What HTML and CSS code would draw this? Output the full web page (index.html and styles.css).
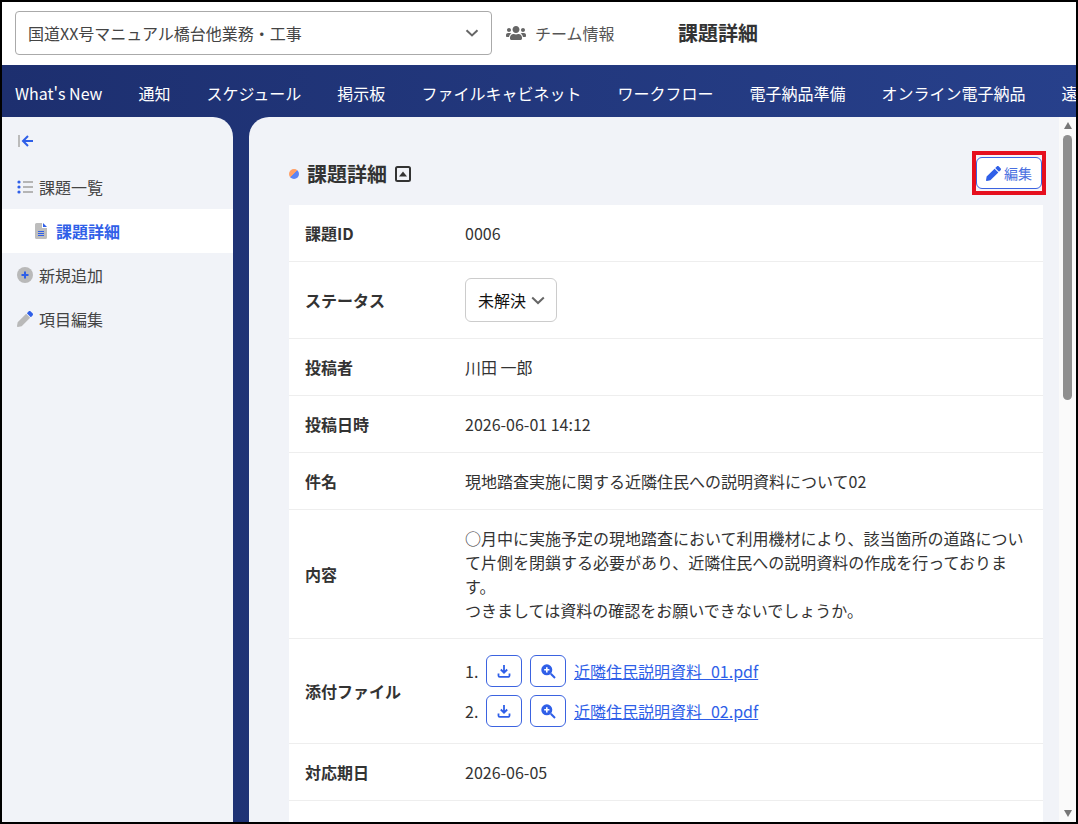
FILE: index.html
```html
<!DOCTYPE html>
<html lang="ja">
<head>
<meta charset="utf-8">
<title>課題詳細</title>
<link rel="stylesheet" href="styles.css">
</head>
<body>
<div class="frame">
  <header class="topbar">
    <div class="project-select">
      <span>国道XX号マニュアル橋台他業務・工事</span>
      <svg class="chev" viewBox="0 0 14 8" width="14" height="8"><path d="M1.5 1.2 7 6.4l5.5-5.2" fill="none" stroke="#666" stroke-width="2"/></svg>
    </div>
    <div class="team">
      <svg viewBox="0 0 640 512" width="20" height="16"><path fill="#666" d="M96 224c35.3 0 64-28.7 64-64s-28.7-64-64-64-64 28.7-64 64 28.7 64 64 64zm448 0c35.3 0 64-28.7 64-64s-28.7-64-64-64-64 28.7-64 64 28.7 64 64 64zm32 32h-64c-17.6 0-33.5 7.1-45.1 18.6 40.3 22.1 68.9 62 75.1 109.4h66c17.7 0 32-14.3 32-32v-32c0-35.3-28.7-64-64-64zm-256 0c61.9 0 112-50.1 112-112S381.9 32 320 32 208 82.1 208 144s50.1 112 112 112zm76.8 32h-8.3c-20.8 10-43.9 16-68.5 16s-47.6-6-68.5-16h-8.3C179.6 288 128 339.6 128 403.2V432c0 26.5 21.5 48 48 48h288c26.5 0 48-21.5 48-48v-28.8c0-63.6-51.6-115.2-115.2-115.2zm-223.7-13.4C161.5 263.1 145.6 256 128 256H64c-35.3 0-64 28.7-64 64v32c0 17.7 14.3 32 32 32h65.9c6.3-47.4 34.9-87.3 75.2-109.4z"/></svg>
      <span>チーム情報</span>
    </div>
    <div class="page-title">課題詳細</div>
  </header>
  <nav class="mainnav">
    <a>What's New</a><a>通知</a><a>スケジュール</a><a>掲示板</a><a>ファイルキャビネット</a><a>ワークフロー</a><a>電子納品準備</a><a>オンライン電子納品</a><a>遠隔臨場</a>
  </nav>
  <div class="workspace">
    <aside class="sidebar">
      <div class="collapse">
        <svg viewBox="0 0 16 14" width="16" height="14"><rect x="0" y="1" width="2" height="12" fill="#bbb"/><path d="M10 2 5 7l5 5M5 7h10" fill="none" stroke="#2f5fe8" stroke-width="2"/></svg>
      </div>
      <div class="side-item">
        <svg viewBox="0 0 16 14" width="16" height="14"><g fill="#2f5fe8"><circle cx="2" cy="2" r="1.6"/><circle cx="2" cy="7" r="1.6"/><circle cx="2" cy="12" r="1.6"/></g><g fill="#b5b5b5"><rect x="6" y="1" width="10" height="2"/><rect x="6" y="6" width="10" height="2"/><rect x="6" y="11" width="10" height="2"/></g></svg>
        <span>課題一覧</span>
      </div>
      <div class="side-item side-active">
        <svg viewBox="0 0 12 16" width="12" height="16"><path d="M1.5 0H7v5h5v9.5a1.5 1.5 0 0 1-1.500 1.500h-9A1.500 1.500 0 0 1 0 14.500v-13A1.500 1.500 0 0 1 1.500 0z" fill="#bdbdbd"/><path d="M8 0l4 4H8z" fill="#2f5fe8"/><path d="M3 8.500h6M3 10.500h6M3 12.500h6" stroke="#2f5fe8" stroke-width="1"/></svg>
        <span>課題詳細</span>
      </div>
      <div class="side-item">
        <svg viewBox="0 0 16 16" width="16" height="16"><circle cx="8" cy="8" r="8" fill="#b9b9b9"/><path d="M8 4.500v7M4.500 8h7" stroke="#2f5fe8" stroke-width="2"/></svg>
        <span>新規追加</span>
      </div>
      <div class="side-item">
        <svg viewBox="0 0 512 512" width="16" height="16"><path fill="#2f5fe8" d="M497.900 142.100l-46.100 46.100c-4.700 4.700-12.300 4.700-17 0l-111-111c-4.700-4.700-4.700-12.300 0-17l46.100-46.100c18.700-18.700 49.100-18.700 67.900 0l60.100 60.100c18.800 18.700 18.800 49.100 0 67.900z"/><path fill="#b9b9b9" d="M284.200 99.800 21.600 362.400.4 483.900c-2.900 16.400 11.400 30.600 27.800 27.800l121.500-21.300 262.600-262.600c4.700-4.700 4.700-12.300 0-17l-111-111c-4.800-4.700-12.400-4.700-17.100 0z"/></svg>
        <span>項目編集</span>
      </div>
    </aside>
    <main class="content">
      <div class="content-inner">
        <div class="heading-row">
          <div class="heading">
            <span class="dot"></span>
            <h1>課題詳細</h1>
            <svg viewBox="0 0 16 16" width="16" height="16"><rect x="1" y="1" width="14" height="14" rx="1.500" fill="none" stroke="#333" stroke-width="2"/><path d="M4 10.500 8 5.500l4 5z" fill="#333"/></svg>
          </div>
          <div class="edit-highlight">
            <button class="edit-btn">
              <svg viewBox="0 0 512 512" width="15" height="15"><path fill="#2f5fe8" d="M497.900 142.100l-46.100 46.100c-4.700 4.700-12.300 4.700-17 0l-111-111c-4.700-4.700-4.700-12.300 0-17l46.100-46.100c18.700-18.700 49.100-18.700 67.900 0l60.100 60.100c18.800 18.700 18.800 49.100 0 67.900zM284.200 99.800 21.600 362.400.4 483.900c-2.900 16.400 11.400 30.600 27.800 27.800l121.500-21.300 262.600-262.600c4.700-4.700 4.700-12.300 0-17l-111-111c-4.800-4.700-12.400-4.700-17.100 0z"/></svg>
              <span>編集</span>
            </button>
          </div>
        </div>
        <div class="card">
          <div class="row"><div class="label">課題ID</div><div class="value">0006</div></div>
          <div class="row"><div class="label">ステータス</div><div class="value">
            <div class="status-select"><span>未解決</span><svg viewBox="0 0 14 9" width="14" height="9"><path d="M1.200 1.500 7 7l5.800-5.500" fill="none" stroke="#666" stroke-width="2"/></svg></div>
          </div></div>
          <div class="row"><div class="label">投稿者</div><div class="value">川田 一郎</div></div>
          <div class="row"><div class="label">投稿日時</div><div class="value">2026-06-01 14:12</div></div>
          <div class="row"><div class="label">件名</div><div class="value">現地踏査実施に関する近隣住民への説明資料について02</div></div>
          <div class="row"><div class="label">内容</div><div class="value">○月中に実施予定の現地踏査において利用機材により、該当箇所の道路について片側を閉鎖する必要があり、近隣住民への説明資料の作成を行っております。<br>つきましては資料の確認をお願いできないでしょうか。</div></div>
          <div class="row"><div class="label">添付ファイル</div><div class="value files">
            <div class="file"><span class="num">1.</span>
              <button class="icon-btn"><svg viewBox="0 0 16 16" width="16" height="16"><path d="M8 2v7M4.800 6.500 8 9.700l3.200-3.200M2.500 10.500v2.200c0 .7.500 1.200 1.200 1.200h8.600c.7 0 1.200-.5 1.200-1.200v-2.200" fill="none" stroke="#2f5fe8" stroke-width="1.800"/></svg></button>
              <button class="icon-btn"><svg viewBox="0 0 16 16" width="16" height="16"><circle cx="6.800" cy="6.800" r="5.500" fill="#2f5fe8"/><path d="M6.800 4.200v5.200M4.200 6.800h5.200" stroke="#fff" stroke-width="1.600"/><path d="M10.800 10.800 15 15" stroke="#2f5fe8" stroke-width="2"/></svg></button>
              <a class="file-link">近隣住民説明資料_01.pdf</a></div>
            <div class="file"><span class="num">2.</span>
              <button class="icon-btn"><svg viewBox="0 0 16 16" width="16" height="16"><path d="M8 2v7M4.800 6.500 8 9.700l3.200-3.200M2.500 10.500v2.200c0 .7.500 1.200 1.200 1.200h8.600c.7 0 1.200-.5 1.200-1.200v-2.200" fill="none" stroke="#2f5fe8" stroke-width="1.800"/></svg></button>
              <button class="icon-btn"><svg viewBox="0 0 16 16" width="16" height="16"><circle cx="6.800" cy="6.800" r="5.500" fill="#2f5fe8"/><path d="M6.800 4.200v5.200M4.200 6.800h5.200" stroke="#fff" stroke-width="1.600"/><path d="M10.800 10.800 15 15" stroke="#2f5fe8" stroke-width="2"/></svg></button>
              <a class="file-link">近隣住民説明資料_02.pdf</a></div>
          </div></div>
          <div class="row"><div class="label">対応期日</div><div class="value">2026-06-05</div></div>
          <div class="row"><div class="label">&nbsp;</div><div class="value">&nbsp;</div></div>
        </div>
      </div>
      <div class="scrollbar">
        <span class="arrow-up"></span>
        <span class="thumb"></span>
        <span class="spacer"></span>
        <span class="arrow-down"></span>
      </div>
    </main>
  </div>
</div>
</body>
</html>
```

FILE: styles.css
```css
* { box-sizing: border-box; }
html, body { margin: 0; padding: 0; height: 100%; overflow: hidden; }
body {
  font-family: "Noto Sans CJK JP", "Noto Sans", sans-serif;
  font-size: 16px;
  line-height: 24px;
  color: #333;
}
.frame {
  width: 1078px;
  height: 824px;
  border: 2px solid #000;
  display: flex;
  flex-direction: column;
  overflow: hidden;
  background: #fff;
}
.topbar {
  flex: 0 0 63px;
  display: flex;
  align-items: center;
  padding: 0 0 1px 13px;
  background: #fff;
}
.project-select {
  width: 477px;
  height: 44px;
  border: 1px solid #aaa;
  border-radius: 4px;
  padding: 0 12px;
  display: flex;
  align-items: center;
  justify-content: space-between;
  color: #444;
}
.chev { flex: none; }
.team {
  display: flex;
  align-items: center;
  gap: 9px;
  margin-left: 14px;
  width: 172px;
  color: #555;
}
.page-title { font-size: 20px; font-weight: 700; color: #333; }
.mainnav {
  flex: 0 0 52px;
  display: flex;
  align-items: center;
  gap: 36px;
  padding: 3px 0 0 13px;
  white-space: nowrap;
  overflow: hidden;
  background: linear-gradient(90deg, #1d2f6f, #27408b);
  color: #fff;
  font-weight: 400;
}
.workspace {
  flex: 1;
  min-height: 0;
  display: flex;
  gap: 16px;
  background: linear-gradient(90deg, #1d2f6f, #27408b);
}
.sidebar {
  flex: 0 0 231px;
  background: #f1f3f8;
  border-top-right-radius: 20px;
  padding-top: 12px;
}
.collapse { height: 24px; padding-left: 16px; display: flex; align-items: center; margin-bottom: 12px; }
.side-item {
  height: 44px;
  display: flex;
  align-items: center;
  gap: 6px;
  padding-left: 15px;
  color: #444;
}
.side-active {
  background: #fff;
  padding-left: 33px;
  gap: 9px;
  color: #2f5fe8;
  font-weight: 700;
}
.content {
  flex: 1;
  min-width: 0;
  display: flex;
  background: #f1f3f8;
  border-top-left-radius: 20px;
}
.content-inner {
  flex: 1;
  min-width: 0;
  padding: 34px 16px 0 40px;
  overflow: hidden;
}
.heading-row {
  display: flex;
  align-items: center;
  justify-content: space-between;
  height: 44px;
  margin-bottom: 10px;
}
.heading { display: flex; align-items: center; gap: 8px; padding-top: 2px; }
.dot {
  width: 10px;
  height: 10px;
  border-radius: 50%;
  background: linear-gradient(135deg, #ff9f66 50%, #5c85f5 50%);
}
.heading h1 { margin: 0; font-size: 20px; line-height: 28px; font-weight: 700; color: #333; }
.edit-highlight {
  width: 74px;
  height: 44px;
  border: 4px solid #e60f1e;
  margin-right: -3px;
  padding: 2px 0 0 0;
  background: #f4f4f8;
}
.edit-btn {
  width: 66px;
  height: 32px;
  border: 1px solid #3b63e0;
  border-radius: 6px;
  background: #fff;
  color: #4a6fe0;
  font: inherit;
  font-size: 14px;
  padding: 0;
  display: flex;
  align-items: center;
  justify-content: center;
  gap: 3px;
}
.card { background: #fff; }
.row {
  display: flex;
  align-items: center;
  padding: 16px;
  border-bottom: 1px solid #eee;
}
.label { flex: 0 0 160px; font-weight: 700; color: #333; }
.value { flex: 1; min-width: 0; color: #333; }
.status-select {
  width: 92px;
  height: 44px;
  border: 1px solid #ccc;
  border-radius: 6px;
  display: flex;
  align-items: center;
  justify-content: space-between;
  padding: 0 11px 0 12px;
  color: #111;
}
.files { display: flex; flex-direction: column; gap: 8px; }
.file { display: flex; align-items: center; gap: 8px; height: 32px; }
.num { width: 13px; }
.icon-btn {
  width: 36px;
  height: 32px;
  border: 1px solid #3b63e0;
  border-radius: 6px;
  background: #fff;
  padding: 0;
  display: flex;
  align-items: center;
  justify-content: center;
}
.file-link { color: #2f5fe8; text-decoration: underline; }
.scrollbar {
  flex: 0 0 17px;
  display: flex;
  flex-direction: column;
  align-items: center;
  background: #fafafa;
  padding: 4px 0 4px;
}
.arrow-up, .arrow-down { width: 0; height: 0; border-left: 4.500px solid transparent; border-right: 4.500px solid transparent; }
.arrow-up { border-bottom: 7px solid #777; margin-top: 1px; }
.arrow-down { border-top: 7px solid #777; margin-bottom: 1px; }
.thumb { width: 9px; height: 265px; border-radius: 5px; background: #8f8f8f; margin-top: 6px; }
.spacer { flex: 1; }
```
